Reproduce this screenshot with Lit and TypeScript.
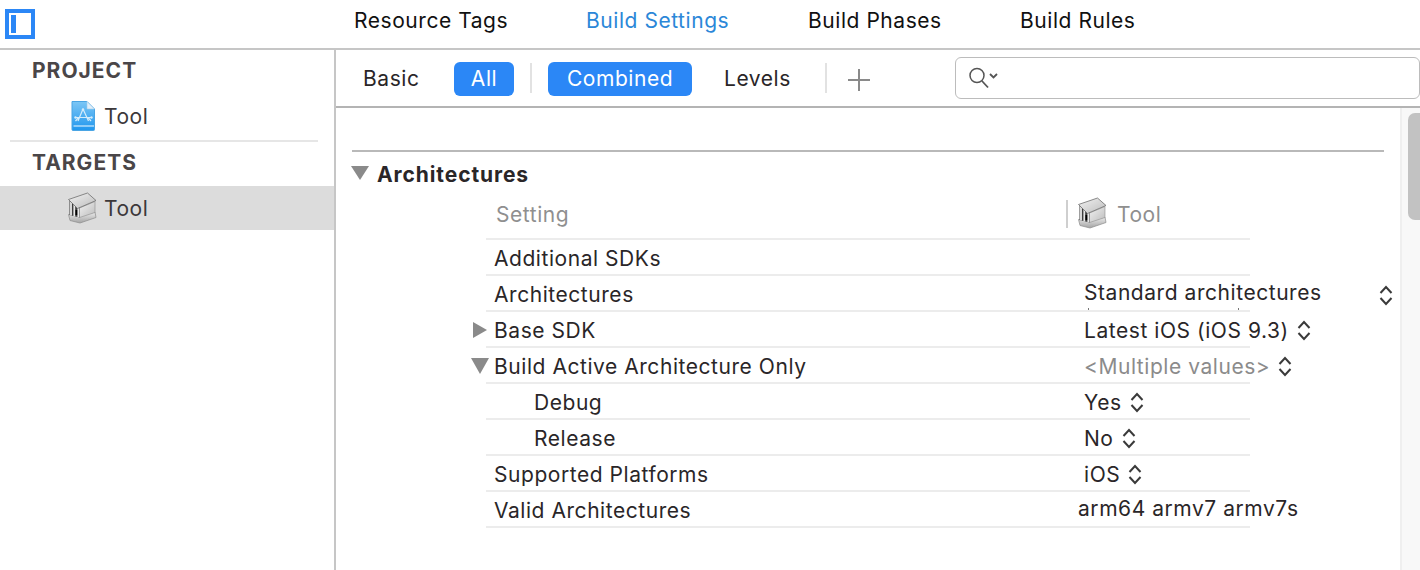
import { LitElement, html, css } from "lit";
import { customElement } from "lit/decorators.js";

const font = css`Inter, "Liberation Sans", Arial, sans-serif`;

const docIcon = html`<svg class="ico" width="26" height="32" viewBox="0 0 26 32">
  <defs><linearGradient id="dg" x1="0" y1="0" x2="0" y2="1"><stop offset="0" stop-color="#7cc6f5"/><stop offset="1" stop-color="#1f96ee"/></linearGradient></defs>
  <path d="M2 1.500H17L24.500 9V29.500a1 1 0 0 1-1 1H3a1 1 0 0 1-1-1Z" fill="url(#dg)" stroke="#4aa5e4"/>
  <path d="M17 1.500V9H24.500Z" fill="#e2eef8" stroke="#9fcdec" stroke-width=".6"/>
  <path d="M13 9L8 21M13 9L18.500 21M5 17.500H21.500M5.500 21l3-3.500M21 21l-3-3.500" fill="none" stroke="#d4ecfb" stroke-width="1.200"/>
  <circle cx="5.500" cy="17.500" r="1.200" fill="#d4ecfb"/><circle cx="21.500" cy="17.500" r="1.200" fill="#d4ecfb"/><circle cx="13" cy="9.500" r="1.200" fill="#d4ecfb"/>
  <path d="M3.500 26H24" stroke="#d4ecfb" stroke-width="1.200"/>
</svg>`;

const bank = html`<svg class="ico" width="30" height="32" viewBox="0 0 30 32">
  <defs>
    <linearGradient id="bb" x1="0" y1="0" x2="0" y2="1"><stop offset="0" stop-color="#ececec"/><stop offset="1" stop-color="#a4a4a4"/></linearGradient>
    <linearGradient id="br" x1="0" y1="0" x2="1" y2="1"><stop offset="0" stop-color="#f2f2f2"/><stop offset="1" stop-color="#bcbcbc"/></linearGradient>
  </defs>
  <path d="M1.500 22.500L10 24.500L28 20L29 25.500L13 31L3 28.500Z" fill="url(#bb)" stroke="#8c8c8c" stroke-width=".7"/>
  <path d="M2.500 8H13V25.500L2.500 23Z" fill="#3e3e3e"/>
  <path d="M4 9.500V23.500M7.300 10.500V24.500M11.300 11.500V25" stroke="#e8e8e8" stroke-width="1.800"/>
  <path d="M8.500 18h1.700v5H8.500Z" fill="#000"/>
  <path d="M12.500 16L28 9.500V20.500L12.500 25.500Z" fill="url(#br)" stroke="#8f8f8f" stroke-width=".6"/>
  <path d="M1.500 7.500L20.500 1L29 8.500L10.500 16.500Z" fill="url(#br)" stroke="#6e6e6e" stroke-width=".8"/>
</svg>`;

const stepper = html`<svg class="stepper" width="14" height="21" viewBox="0 0 14 21">
  <path d="M1.500 8L7 2L12.500 8M1.500 13L7 19L12.500 13" fill="none" stroke="#3a3a3a" stroke-width="2"/>
</svg>`;

const triSec = html`<svg class="tri" width="18" height="14" viewBox="0 0 18 14"><path d="M0 0H18L9 14Z" fill="#8a8a8a"/></svg>`;
const triDown = html`<svg class="tri" width="18" height="16" viewBox="0 0 18 16"><path d="M0 0H18L9 16Z" fill="#8a8a8a"/></svg>`;
const triRight = html`<svg class="tri" width="14" height="16" viewBox="0 0 14 16"><path d="M0 0V16L14 8Z" fill="#8a8a8a"/></svg>`;

type Row = { label: string; value?: string; tri?: "d" | "r"; sub?: boolean; step?: boolean; muted?: boolean };
const rows: Row[] = [
  { label: "Additional SDKs" },
  { label: "Base SDK", value: "Latest iOS (iOS 9.3)", tri: "r", step: true },
  { label: "Build Active Architecture Only", value: "<Multiple values>", tri: "d", step: true, muted: true },
  { label: "Debug", value: "Yes", sub: true, step: true },
  { label: "Release", value: "No", sub: true, step: true },
  { label: "Supported Platforms", value: "iOS", step: true },
];

@customElement("app-root")
export class AppRoot extends LitElement {
  static styles = css`
    :host { display: block; width: 1420px; height: 570px; overflow: hidden; background: #fff; font-family: ${font}; color: #2a2628; font-size: 21px; letter-spacing: .55px; }
    .top { height: 48px; border-bottom: 2px solid #c6c6c6; display: flex; align-items: center; }
    .panel-btn { width: 30px; height: 30px; margin-left: 5px; border: 4px solid #2b87f6; padding: 2px; box-sizing: border-box; flex: none; }
    .panel-btn div { width: 5px; height: 100%; background: #2b87f6; }
    .tabs { display: flex; margin-left: 319px; margin-top: -8px; color: #111; }
    .tabs span { white-space: nowrap; }
    .tabs .a { width: 232px; }
    .tabs .b { width: 222px; color: #2b87d8; }
    .tabs .c { width: 212px; }
    .body { display: flex; height: 520px; }
    .side { width: 334px; border-right: 2px solid #c6c6c6; flex: none; }
    .head { font-weight: 700; color: #4a4648; padding-left: 32px; letter-spacing: 1px; }
    .head.p { height: 42px; line-height: 41px; }
    .head.t { height: 44px; line-height: 42px; }
    .item { display: flex; align-items: center; height: 44px; }
    .item .ico { flex: none; }
    .item span { margin-left: 8px; color: #3c383a; }
    .item.doc { padding-left: 70px; height: 48px; }
    .item.tgt { padding-left: 67px; background: #dcdcdc; }
    .item.tgt span { margin-left: 7px; }
    .side hr { margin: 0 16px 0 10px; border: 0; height: 2px; background: #e6e6e6; }
    .main { flex: 1; min-width: 0; display: flex; flex-direction: column; }
    .bar { height: 56px; border-bottom: 2px solid #b4b4b4; display: flex; align-items: center; flex: none; }
    .bar .t { color: #2a2628; flex: none; }
    .basic { width: 56px; margin-left: 27px; }
    .levels { width: 67px; margin-left: 32px; }
    .pill { background: #2b87f6; color: #fff; border-radius: 6px; height: 34px; line-height: 34px; text-align: center; flex: none; margin-top: 2px; }
    .all { width: 60px; margin-left: 35px; }
    .combined { width: 144px; margin-left: 16px; }
    .sep { width: 2px; height: 30px; background: #e2e2e2; flex: none; }
    .sep1 { margin-left: 16px; }
    .sep2 { margin-left: 34px; }
    .plus { width: 22px; height: 22px; margin-left: 21px; margin-top: 4px; flex: none; }
    .search { width: 465px; height: 42px; margin-left: 85px; flex: none; border: 1px solid #bcbcbc; border-radius: 6px; box-sizing: border-box; display: flex; align-items: center; padding-left: 12px; }
    .content { flex: 1; display: flex; min-height: 0; }
    .scroll { flex: 1; min-width: 0; padding: 42px 0 0 16px; }
    .rule { height: 2px; background: #b9b9b9; width: 1032px; }
    .sec { display: flex; align-items: center; height: 44px; font-weight: 700; gap: 7px; color: #2a2628; letter-spacing: .9px; }
    .sec .tri { margin-top: -2px; margin-left: -1px; }
    .sec span { margin-left: 1px; }
    .table { margin-left: 118px; }
    .hdr { margin-left: 16px; width: 764px; height: 42px; border-bottom: 2px solid #ececec; display: flex; align-items: center; color: #8f8f8f; }
    .hdr .s { width: 580px; padding-left: 10px; box-sizing: border-box; margin-top: -6px; flex: none; }
    .hdr .vr { width: 2px; height: 28px; background: #cfcfcf; margin-top: -6px; flex: none; }
    .hdr .ico { margin-left: 9px; margin-top: -8px; flex: none; }
    .hdr .n { margin-left: 10px; margin-top: -6px; }
    .row { display: grid; grid-template-columns: 16px 764px; height: 36px; }
    .cell { display: flex; align-items: center; height: 36px; box-sizing: border-box; border-bottom: 2px solid #ececec; padding-top: 2px; }
    .tri-col { display: flex; align-items: center; justify-content: center; padding-left: 4px; box-sizing: border-box; min-width: 0; }
    .tri { flex: none; }
    .lbl { width: 590px; flex: none; padding-left: 8px; box-sizing: border-box; white-space: nowrap; }
    .lbl.sub { padding-left: 48px; }
    .val { display: flex; align-items: center; gap: 8px; white-space: nowrap; margin-left: 8px; flex: none; }
    .val.muted { color: #8b8b8b; }
    .val.valid { margin-left: 2px; margin-top: -4px; }
    .arch { display: flex; align-items: flex-start; margin: -2px 0 0 8px; flex: none; align-self: flex-start; }
    .clip { width: 295px; height: 34px; overflow: hidden; line-height: 28px; padding-top: 3px; box-sizing: border-box; white-space: nowrap; }
    .ticks { display: flex; justify-content: space-between; width: 151px; margin: 1px 0 0 4px; }
    .ticks i { width: 1px; height: 2px; background: #777; }
    .arch .stepper { margin-top: 9px; }
    .sb { width: 20px; flex: none; background: #f8f8f8; border-left: 2px solid #efefef; box-sizing: border-box; padding: 5px 0 0 6px; overflow: hidden; }
    .thumb { width: 18px; height: 107px; border-radius: 7px; background: #c2c2c2; }
  `;

  private renderRow(r: Row) {
    return html`
      <div class="row">
        <div class="tri-col">${r.tri === "r" ? triRight : r.tri === "d" ? triDown : ""}</div>
        <div class="cell">
          <div class="lbl ${r.sub ? "sub" : ""}">${r.label}</div>
          ${r.value ? html`<div class="val ${r.muted ? "muted" : ""}">${r.value}${r.step ? stepper : ""}</div>` : ""}
        </div>
      </div>`;
  }

  render() {
    return html`
      <div class="top">
        <div class="panel-btn"><div></div></div>
        <div class="tabs">
          <span class="a">Resource Tags</span><span class="b">Build Settings</span><span class="c">Build Phases</span><span>Build Rules</span>
        </div>
      </div>
      <div class="body">
        <aside class="side">
          <div class="head p">PROJECT</div>
          <div class="item doc">${docIcon}<span>Tool</span></div>
          <hr />
          <div class="head t">TARGETS</div>
          <div class="item tgt">${bank}<span>Tool</span></div>
        </aside>
        <section class="main">
          <div class="bar">
            <span class="t basic">Basic</span>
            <div class="pill all">All</div>
            <div class="sep sep1"></div>
            <div class="pill combined">Combined</div>
            <span class="t levels">Levels</span>
            <div class="sep sep2"></div>
            <svg class="plus" viewBox="0 0 22 22"><path d="M11 0V22M0 11H22" stroke="#8a8a8a" stroke-width="2"/></svg>
            <div class="search">
              <svg width="34" height="24" viewBox="0 0 34 24"><circle cx="9" cy="9.500" r="7" fill="none" stroke="#555" stroke-width="1.500"/><path d="M14 15L20 21.500" stroke="#555" stroke-width="1.800"/><path d="M22 8L25.500 11.500L29 8" fill="none" stroke="#555" stroke-width="1.800"/></svg>
            </div>
          </div>
          <div class="content">
            <div class="scroll">
              <div class="rule"></div>
              <div class="sec">${triSec}<span>Architectures</span></div>
              <div class="table">
                <div class="hdr">
                  <div class="s">Setting</div><div class="vr"></div>${bank}<span class="n">Tool</span>
                </div>
                ${this.renderRow(rows[0])}
                <div class="row">
                  <div class="tri-col"></div>
                  <div class="cell">
                    <div class="lbl">Architectures</div>
                    <div class="arch">
                      <div class="clip">Standard architectures<div class="ticks"><i></i><i></i></div></div>
                      ${stepper}
                    </div>
                  </div>
                </div>
                ${rows.slice(1).map(r => this.renderRow(r))}
                <div class="row">
                  <div class="tri-col"></div>
                  <div class="cell">
                    <div class="lbl">Valid Architectures</div>
                    <div class="val valid">arm64 armv7 armv7s</div>
                  </div>
                </div>
              </div>
            </div>
            <div class="sb"><div class="thumb"></div></div>
          </div>
        </section>
      </div>
    `;
  }
}
